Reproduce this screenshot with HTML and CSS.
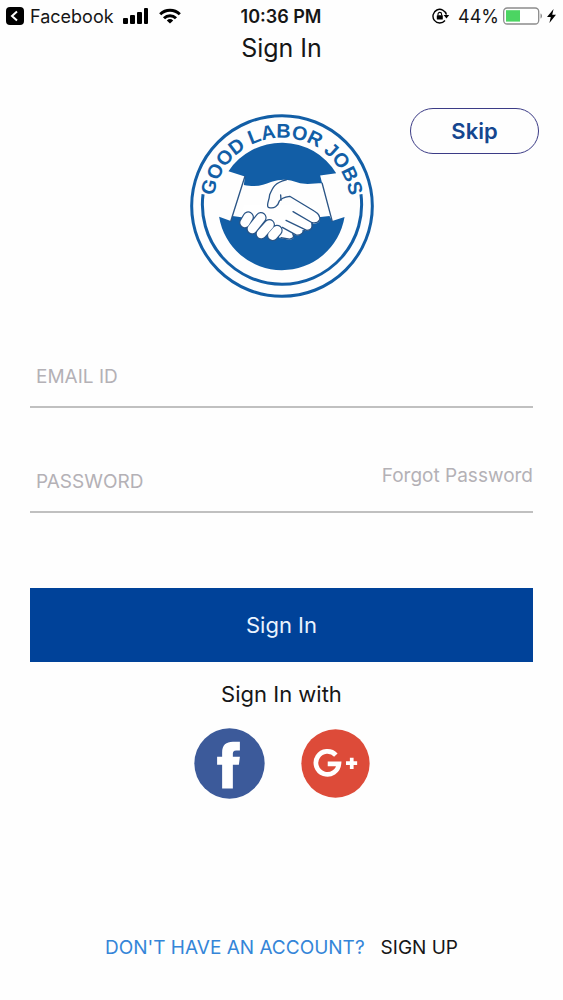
FILE: index.html
```html
<!DOCTYPE html>
<html lang="en">
<head>
  <meta charset="UTF-8">
  <meta name="viewport" content="width=device-width, initial-scale=1.0">
  <title>Sign In</title>
  <link rel="stylesheet" href="styles.css">
</head>
<body>
  <div class="status-bar">
    <div class="status-left">
      <svg class="back-icon" viewBox="0 0 18 18" width="18" height="18">
        <rect width="18" height="18" rx="4"/>
        <path d="M11 4.5 6 9l5 4.5" fill="none" stroke="#fff" stroke-width="2"/>
      </svg>
      <span class="back-app">Facebook</span>
      <svg class="signal-icon" viewBox="0 0 26 16" width="26" height="16">
        <rect x="0" y="10" width="5" height="6" rx="1"/>
        <rect x="7" y="7" width="5" height="9" rx="1"/>
        <rect x="14" y="4" width="5" height="12" rx="1"/>
        <rect x="21" y="0" width="4" height="16" rx="1"/>
      </svg>
      <svg viewBox="0 0 22 16" width="22" height="16">
        <g fill="none" stroke="#000" stroke-width="3">
          <path d="M1.2 6.2a14 14 0 0 1 19.6 0"/>
          <path d="M5 10.2a8.6 8.6 0 0 1 12 0"/>
        </g>
        <path d="M7.8 12.4a4.8 4.8 0 0 1 6.4 0L11 15.6z"/>
      </svg>
    </div>
    <div class="status-time">10:36 PM</div>
    <div class="status-right">
      <svg class="lock-icon" viewBox="0 0 18 16" width="18" height="16">
        <path d="M14.4 6.600A6.800 6.800 0 1 0 13 12.500" fill="none" stroke="#000" stroke-width="1.400"/>
        <path d="M11.600 7h5.600l-2.700 3.600z"/>
        <rect x="4.800" y="7.200" width="6" height="4.200" rx=".5"/>
        <path d="M6 7.500V6.200a1.800 1.800 0 0 1 3.600 0v1.300" fill="none" stroke="#000" stroke-width="1.100"/>
      </svg>
      <span>44%</span>
      <svg viewBox="0 0 40 18" width="40" height="18">
        <rect x=".7" y="1" width="35" height="16" rx="3.5" fill="#fff" stroke="#8c8c8c" stroke-width="1.3"/>
        <rect x="3" y="3.2" width="14" height="11.4" fill="#4cd562"/>
        <path d="M37.5 6.5c2 .6 2 4.400 0 5z" fill="#8c8c8c"/>
      </svg>
      <svg class="bolt-icon" viewBox="0 0 9 14" width="9" height="14">
        <path d="M6.600 0 0 8h3.800L2.400 14 9 5.700H5.200z"/>
      </svg>
    </div>
  </div>

  <h1>Sign In</h1>

  <div class="top-area">
    <svg class="logo" viewBox="26 28 550 550" role="img" aria-label="Good Labor Jobs">
      <circle cx="301" cy="303" r="270" fill="none" stroke="#125ea6" stroke-width="9"/>
      <path d="M65 268A238 238 0 1 0 537 268" fill="none" stroke="#125ea6" stroke-width="9"/>
      <path id="logo-arc" d="M300 509A205 205 0 1 1 301 509" fill="none"/>
      <text class="logo-text"><textPath href="#logo-arc" startOffset="50%">GOOD LABOR JOBS</textPath></text>

      <!-- sleeves cut the disc in two -->
      <path fill="#125ea6" d="M141 199 190 215 187 240C225 248 245 240 268 231 305 219 325 225 348 233 372 241 398 235 421 235L415 212 463 205A191 191 0 0 0 141 199z"/>
      <path fill="#125ea6" d="M113 335 148 348 153 333 180 337H410L443 333 451 348 488 336A190 190 0 0 1 113 335z"/>

      <g fill="none" stroke="#2b5586" stroke-width="4" stroke-linecap="round" stroke-linejoin="round">
        <path d="M190 215 148 348M421 235 451 348"/>
      </g>

      <!-- right hand -->
      <path fill="#fff" d="M187 300H400L414 335Q418 355 396 356L388 354Q394 373 378 376L362 375Q364 390 347 391L332 388Q343 403 320 403L295 399 225 345 180 337z"/>
      <g fill="none" stroke="#2b5586" stroke-width="4" stroke-linecap="round" stroke-linejoin="round">
        <path d="M314 225C279 233 273 248 264 270 263 287 253 300 260 307 278 313 289 303 293 288 298 279 312 276 324 274L397 318Q418 330 413 345 407 356 391 353L334 320"/>
        <path d="M298 286 297 270M391 353Q395 375 375 376L313 346M369 374Q360 392 344 390L302 367M333 386Q341 400 324 402L298 398"/>
      </g>

      <!-- left hand fingers -->
      <g fill="none" stroke-linecap="round">
        <g stroke="#2b5586" stroke-width="34">
          <path d="M200 336 190 353M238 338 212 371M263 359 239 386M286 376 273 391"/>
        </g>
        <g stroke="#fff" stroke-width="27">
          <path d="M200 336 190 353M238 338 212 371M263 359 239 386M286 376 273 391"/>
        </g>
      </g>
    </svg>
    <button class="skip-button" type="button">Skip</button>
  </div>

  <form class="sign-in-form">
    <div class="field">
      <input type="email" placeholder="EMAIL ID" aria-label="Email ID">
    </div>
    <div class="field">
      <input type="password" placeholder="PASSWORD" aria-label="Password">
      <a class="forgot" href="#">Forgot Password</a>
    </div>
    <button class="sign-in-button" type="submit">Sign In</button>
  </form>

  <p class="with-text">Sign In with</p>

  <div class="social">
    <button type="button" aria-label="Facebook">
      <svg viewBox="0 0 212 212" width="71" height="71">
        <circle cx="106" cy="106" r="105" fill="#3c5a9a"/>
        <path fill="#fff" d="M84 181V110H69V86H84V73C84 51 96 41 116 41H137V67H126C118 67 116 71 116 77V86H137L134 110H116V181z"/>
      </svg>
    </button>
    <button type="button" aria-label="Google Plus">
      <svg viewBox="0 0 204 204" width="69" height="69">
        <circle cx="102" cy="102" r="101" fill="#dd4b39"/>
        <path d="M103 77A34 34 0 1 0 112 103H79" fill="none" stroke="#fff" stroke-width="14"/>
        <path d="M150 85V118M133 101H166" fill="none" stroke="#fff" stroke-width="11"/>
      </svg>
    </button>
  </div>

  <div class="footer">
    <span class="question">DON'T HAVE AN ACCOUNT?</span>
    <a href="#">SIGN UP</a>
  </div>
</body>
</html>
```
FILE: styles.css
```css
* {
  box-sizing: border-box;
}

body {
  margin: 0;
  min-height: 100vh;
  display: flex;
  flex-direction: column;
  background-color: #fefefe;
  color: #161616;
  font-family: Inter, "Liberation Sans", sans-serif;
}

svg {
  display: block;
}

a {
  color: inherit;
  text-decoration: none;
}

button {
  font-family: inherit;
  padding: 0;
  cursor: pointer;
}

/* status bar */
.status-bar {
  display: grid;
  grid-template-columns: 1fr auto 1fr;
  align-items: center;
  height: 32px;
  padding: 0 7px 0 6px;
  font-size: 18px;
}

.status-left,
.status-right {
  display: flex;
  align-items: center;
}

.status-right {
  justify-content: flex-end;
}

.back-app {
  margin-left: 6px;
}

.signal-icon {
  margin: 0 10px 0 9px;
}

.status-time {
  font-weight: 600;
}

.lock-icon {
  margin-right: 8px;
}

.status-right span {
  margin-right: 4px;
}

.bolt-icon {
  margin-left: 4px;
}

h1 {
  margin: 0;
  font-size: 25px;
  line-height: 32px;
  font-weight: 400;
  text-align: center;
}

/* logo and skip */
.top-area {
  display: grid;
  grid-template-columns: 1fr auto 1fr;
  align-items: start;
  margin-top: 44px;
  padding: 0 24px;
}

.logo {
  grid-column: 2;
  width: 184px;
  height: 184px;
  margin-top: 6px;
}

.logo-text {
  font-family: "Liberation Sans", sans-serif;
  font-size: 59px;
  font-weight: 700;
  fill: #125ea6;
  text-anchor: middle;
}

.skip-button {
  justify-self: end;
  width: 129px;
  height: 46px;
  border: 1px solid #3c3c86;
  border-radius: 23px;
  background: none;
  color: #15468f;
  font-size: 22px;
  font-weight: 600;
}

/* form */
.sign-in-form {
  margin: 48px 30px 0;
}

.field {
  display: flex;
  align-items: flex-start;
  height: 62px;
  margin-bottom: 43px;
  border-bottom: 2px solid #c0c0c0;
}

.field input {
  flex: 1;
  min-width: 0;
  height: 60px;
  padding: 0 6px;
  border: none;
  outline: none;
  background: none;
  font-family: inherit;
  font-size: 19px;
}

.field input::placeholder {
  color: #b4b1b6;
  opacity: 1;
}

.forgot {
  color: #b4b1b6;
  font-size: 19px;
  line-height: 50px;
}

.sign-in-button {
  display: block;
  width: 100%;
  height: 74px;
  margin-top: 75px;
  border: none;
  background-color: #004299;
  color: #eaf3ff;
  font-size: 22px;
}

.with-text {
  margin: 16px 0 0;
  font-size: 22px;
  line-height: 32px;
  text-align: center;
}

/* social buttons */
.social {
  display: flex;
  justify-content: center;
  align-items: center;
  gap: 36px;
  margin-top: 18px;
}

.social button {
  border: none;
  background: none;
}

.footer {
  display: flex;
  justify-content: center;
  gap: 16px;
  margin-top: auto;
  padding: 40px 0 39px;
  font-size: 19px;
  line-height: 26px;
}

.question {
  color: #3485d8;
}
```
